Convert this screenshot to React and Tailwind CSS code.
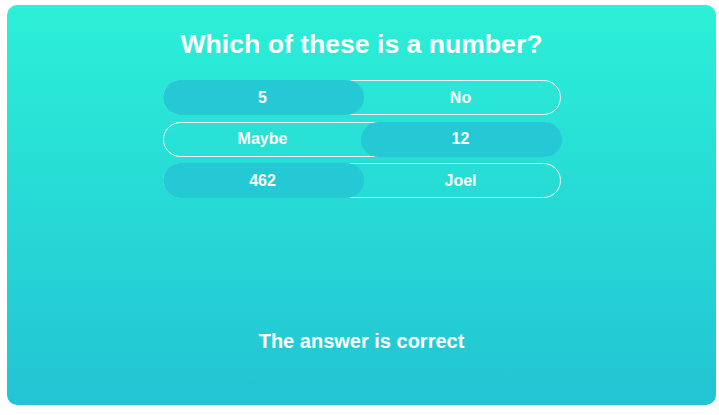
const options = [
  { left: '5', right: 'No', picked: 'left' },
  { left: 'Maybe', right: '12', picked: 'right' },
  { left: '462', right: 'Joel', picked: 'left' },
];

function OptionRow({ row }) {
  return (
    <div className="relative w-[398px] h-[35px] rounded-full border border-white">
      <div
        className={`absolute -top-px -bottom-px w-[201px] rounded-full bg-[#24c9d5] ${
          row.picked === 'left' ? '-left-px' : '-right-[2px]'
        }`}
      />
      <div className="relative grid grid-cols-2 h-full items-center text-[16px] font-bold text-white">
        <span className="text-center">{row.left}</span>
        <span className="text-center">{row.right}</span>
      </div>
    </div>
  );
}

export default function App() {
  return (
    <div className="w-[719px] h-[415px] bg-white pt-[5px] pl-[7px]" style={{ fontFamily: '"Liberation Sans", Arial, sans-serif' }}>
      <div className="w-[709px] h-[400px] rounded-[10px] bg-gradient-to-b from-[#2cf0d7] to-[#22c4d3] flex flex-col items-center">
        <h1 className="mt-[21px] text-[26.6px] leading-[36px] font-bold text-white">
          Which of these is a number?
        </h1>
        <div className="mt-[18px] flex flex-col gap-[6.5px]">
          {options.map((row, i) => (
            <OptionRow key={i} row={row} />
          ))}
        </div>
        <p className="mt-[131px] text-[20px] leading-[24px] font-bold text-white">
          The answer is correct
        </p>
      </div>
    </div>
  );
}
